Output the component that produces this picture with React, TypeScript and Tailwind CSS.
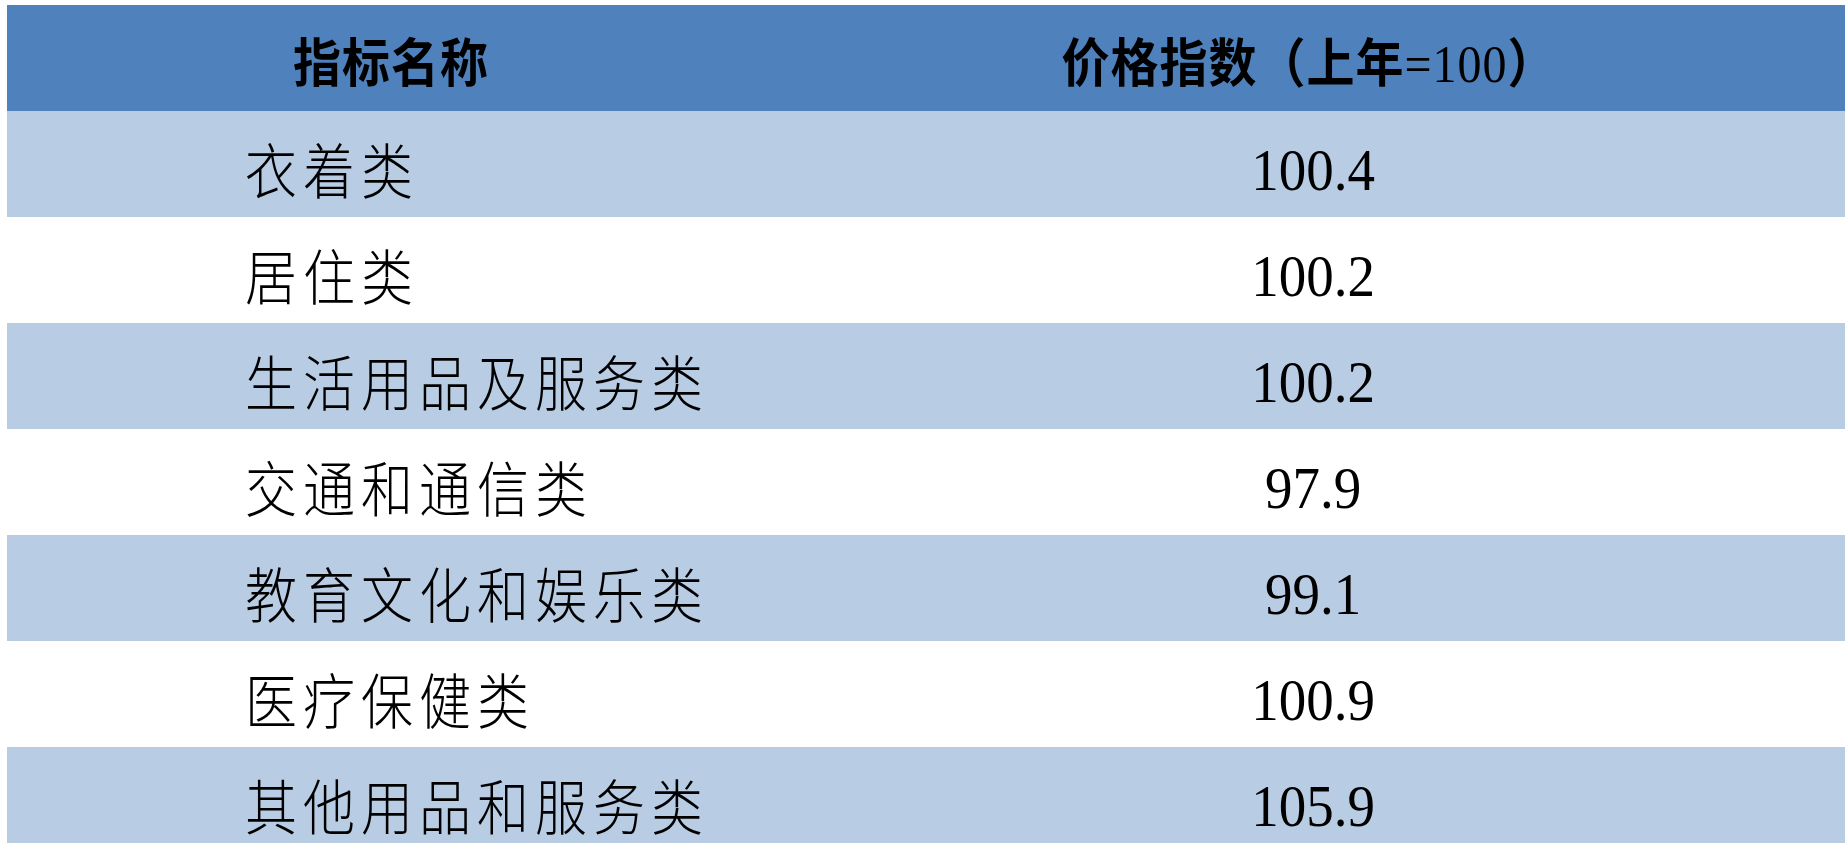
const FONT = "font-['Liberation_Serif','Noto_Sans_CJK_SC',serif]";

interface Row {
  name: string;
  value: string;
}

const ROWS: Row[] = [
  { name: "衣着类", value: "100.4" },
  { name: "居住类", value: "100.2" },
  { name: "生活用品及服务类", value: "100.2" },
  { name: "交通和通信类", value: "97.9" },
  { name: "教育文化和娱乐类", value: "99.1" },
  { name: "医疗保健类", value: "100.9" },
  { name: "其他用品和服务类", value: "105.9" },
];

export default function App() {
  return (
    <div className={`h-[843px] w-full overflow-hidden bg-white pl-[7px] pr-[2px] pt-[5px] text-black ${FONT}`}>
      <div className="grid h-[106px] grid-cols-[768px_1fr] bg-[#4f81bd] pt-[12px] text-[48px] font-bold tracking-[1px]">
        <div className="flex items-center justify-center">
          <span className="inline-block scale-y-110">指标名称</span>
        </div>
        <div className="flex items-center justify-center pr-[2px]">
          <span className="inline-block scale-y-110">
            价格指数（上年<span className="font-medium">=100</span>）
          </span>
        </div>
      </div>
      {ROWS.map((row, i) => (
        <div
          key={row.name}
          className={`grid h-[106px] grid-cols-[768px_1fr] ${i % 2 === 0 ? "bg-[#b8cce4]" : "bg-white"}`}
        >
          <div className="flex items-center pl-[238px] pt-[20px] text-[52px] font-light tracking-[6px]">
            <span className="inline-block scale-y-[1.15]">{row.name}</span>
          </div>
          <div className="flex items-center justify-center pl-[6px] pt-[14px] text-[55px]">
            <span className="inline-block scale-y-[1.08]">{row.value}</span>
          </div>
        </div>
      ))}
    </div>
  );
}
